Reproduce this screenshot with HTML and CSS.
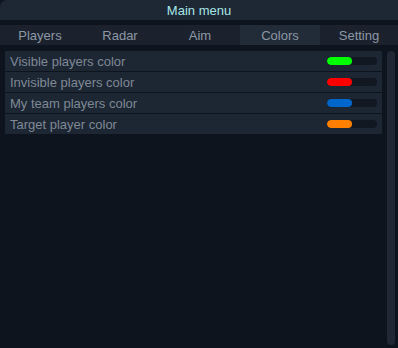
FILE: index.html
```html
<!DOCTYPE html>
<html lang="en">

<head>
    <meta charset="UTF-8">
    <meta name="viewport" content="width=device-width, initial-scale=1.0">
    <title>Main menu</title>
    <link rel="stylesheet" href="styles.css">
</head>

<body>
    <div class="window">
        <div class="title-bar">Main menu</div>

        <!-- Tabs -->
        <div class="tabs">
            <div class="tab">Players</div>
            <div class="tab">Radar</div>
            <div class="tab">Aim</div>
            <div class="tab active">Colors</div>
            <div class="tab">Setting</div>
        </div>

        <div class="content">
            <div class="list">
                <div class="row">
                    <span class="label">Visible players color</span>
                    <span class="swatch"><span class="fill green"></span></span>
                </div>
                <div class="row">
                    <span class="label">Invisible players color</span>
                    <span class="swatch"><span class="fill red"></span></span>
                </div>
                <div class="row">
                    <span class="label">My team players color</span>
                    <span class="swatch"><span class="fill blue"></span></span>
                </div>
                <div class="row">
                    <span class="label">Target player color</span>
                    <span class="swatch"><span class="fill orange"></span></span>
                </div>
            </div>
            <div class="scrollbar"></div>
        </div>
    </div>
</body>

</html>
```

FILE: styles.css
```css
* {
    box-sizing: border-box;
}

body {
    margin: 0;
    background-color: #0e141d;
    font-family: "Liberation Sans", Arial, sans-serif;
    font-size: 13px;
}

.window {
    width: 398px;
    height: 348px;
    display: flex;
    flex-direction: column;
}

.title-bar {
    height: 20px;
    line-height: 21px;
    background-color: #1e2734;
    border-top-left-radius: 7px;
    color: #a6e6e6;
    text-align: center;
}

.tabs {
    display: flex;
    height: 20px;
    margin-top: 5px;
    background-color: #1b222d;
}

.tab {
    flex: 0 0 80px;
    line-height: 21px;
    text-align: center;
    color: #8d98a6;
}

.tab:last-child {
    flex: 1;
}

.tab.active {
    background-color: #222c39;
}

.content {
    flex: 1;
    display: flex;
    padding: 6px 3px 3px 5px;
    gap: 5px;
}

.list {
    flex: 1;
    align-self: flex-start;
    display: flex;
    flex-direction: column;
    gap: 1px;
}

.row {
    height: 20px;
    display: flex;
    align-items: center;
    justify-content: space-between;
    padding: 0 5px;
    background-color: #1d2633;
}

.label {
    color: #7f8996;
}

.swatch {
    width: 50px;
    height: 8px;
    border-radius: 4px;
    background-color: #111822;
    overflow: hidden;
}

.fill {
    display: block;
    width: 25px;
    height: 8px;
    border-radius: 4px;
}

.green {
    background-color: #00ff00;
}

.red {
    background-color: #ff0000;
}

.blue {
    background-color: #0066cc;
}

.orange {
    background-color: #ff8000;
}

.scrollbar {
    width: 8px;
    background-color: #1f2834;
    border-radius: 4px;
}
```
